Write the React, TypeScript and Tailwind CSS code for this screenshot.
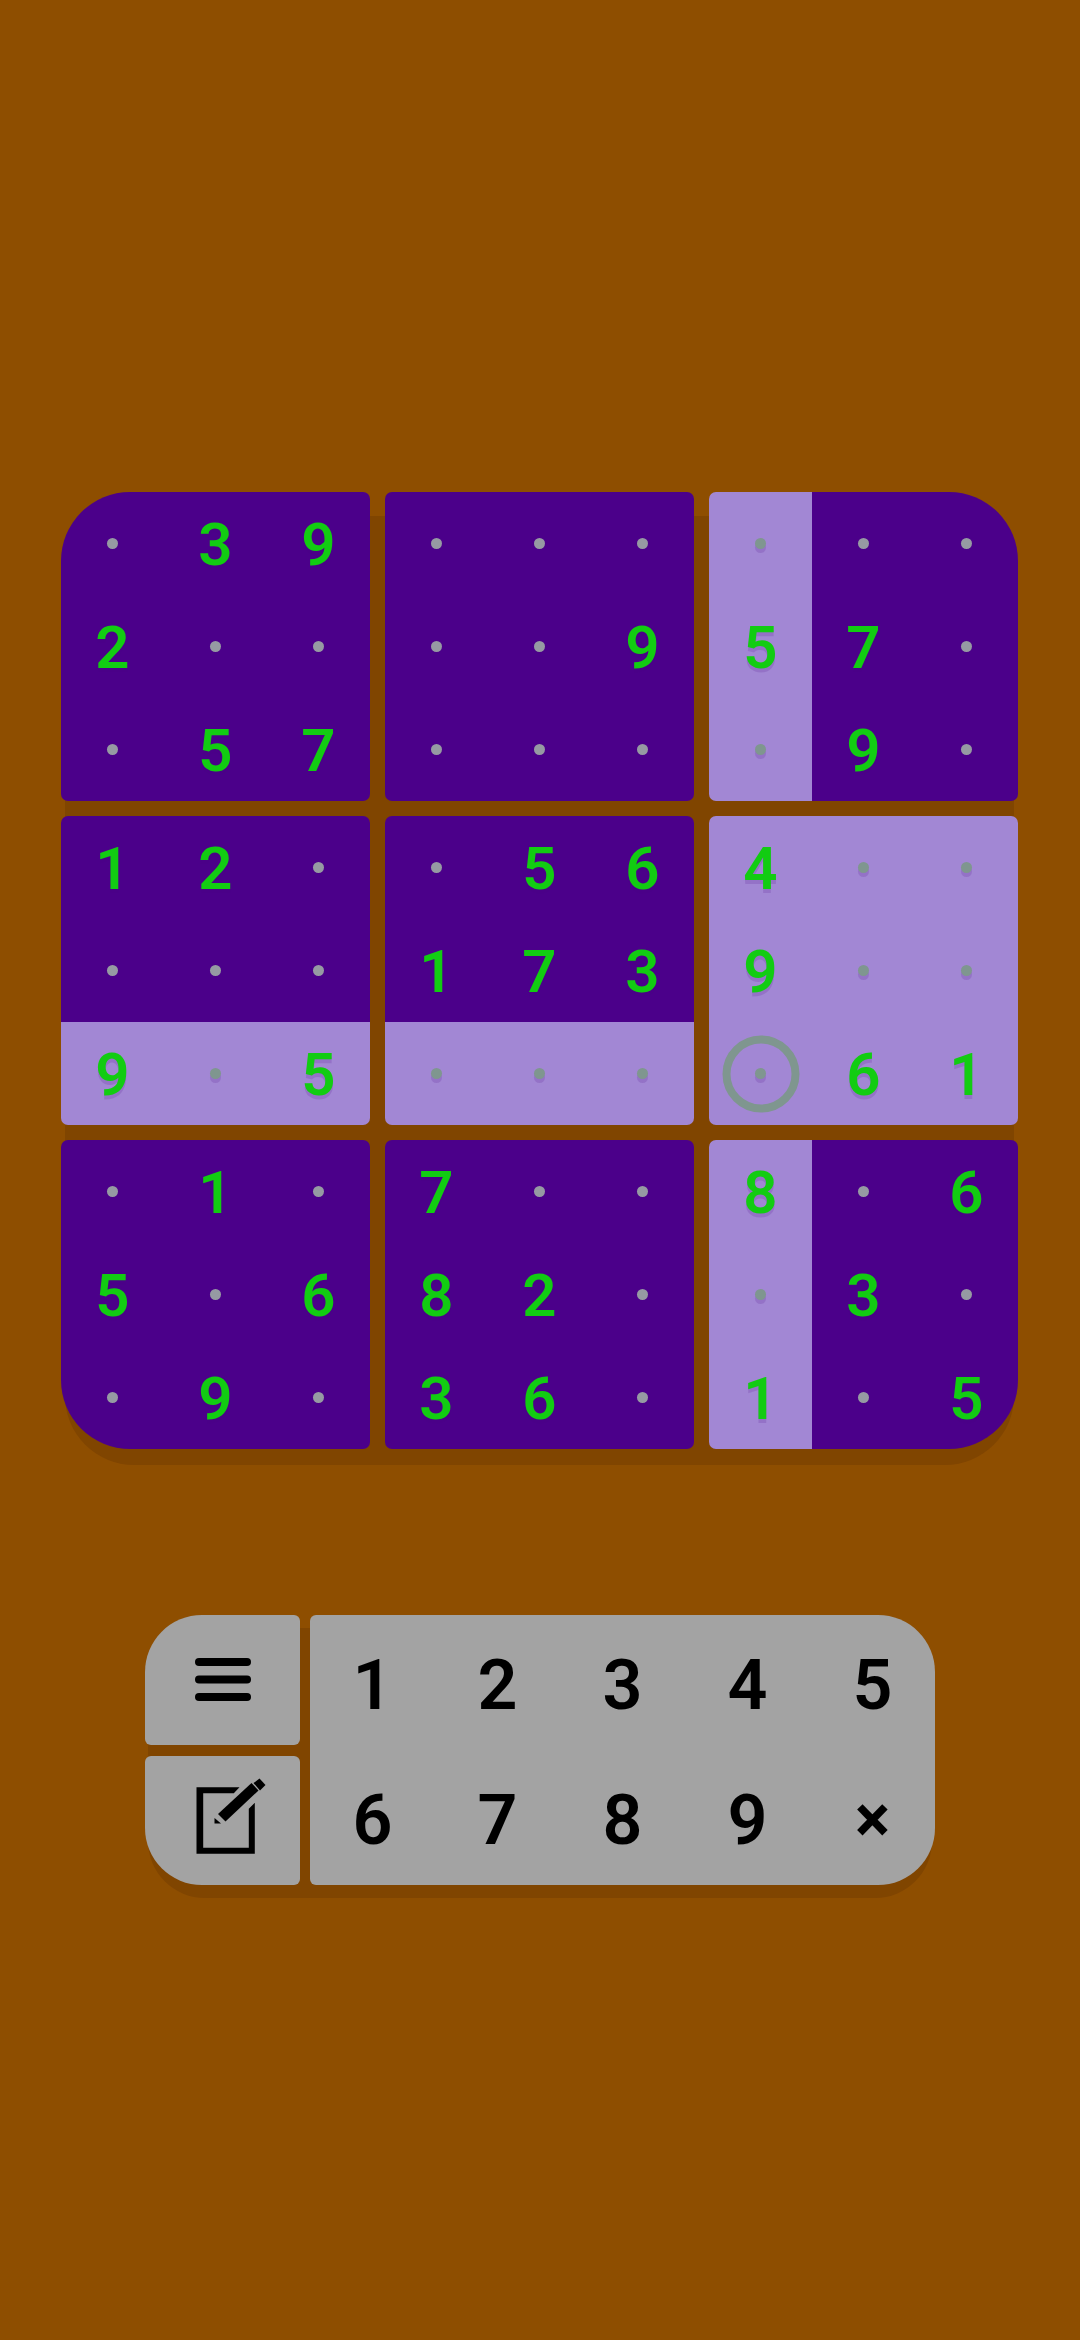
const BOXES = [
  ['.39', '2..', '.57'],
  ['...', '..9', '...'],
  ['...', '57.', '.9.'],
  ['12.', '...', '9.5'],
  ['.56', '173', '...'],
  ['4..', '9..', '.61'],
  ['.1.', '5.6', '.9.'],
  ['7..', '82.', '36.'],
  ['8.6', '.3.', '1.5'],
];

const BOX_CORNERS = [
  'rounded-[7px] rounded-tl-[69px]',
  'rounded-[7px]',
  'rounded-[7px] rounded-tr-[69px]',
  'rounded-[7px]',
  'rounded-[7px]',
  'rounded-[7px]',
  'rounded-[7px] rounded-bl-[69px]',
  'rounded-[7px]',
  'rounded-[7px] rounded-br-[69px]',
];

const SELECTED = { box: 5, row: 2, col: 0 };

function isLight(box: number, row: number, col: number) {
  if (box === 5) return true;
  if (box === 3 || box === 4) return row === 2;
  if (box === 2 || box === 8) return col === 0;
  return false;
}

function Cell({ value, light, selected }: { value: string; light: boolean; selected: boolean }) {
  return (
    <div className={`relative flex items-center justify-center ${light ? 'bg-[#a287d4]' : 'bg-[#4b008a]'}`}>
      {value === '.' ? (
        <span
          className={`h-[11px] w-[11px] rounded-full ${
            light ? 'bg-[#7f968f] shadow-[0_4px_0_rgba(75,0,130,0.15)]' : 'bg-[#969aa3]'
          }`}
        />
      ) : (
        <span className="pt-[2px] text-[60px] leading-none font-semibold text-[#12cc12] [text-shadow:0_4px_0_rgba(75,0,130,0.15)]">
          {value}
        </span>
      )}
      {selected && (
        <div className="absolute top-1/2 left-1/2 h-[77px] w-[77px] -translate-x-1/2 -translate-y-1/2 rounded-full border-[8px] border-[#7f968f]" />
      )}
    </div>
  );
}

function MenuIcon() {
  return (
    <svg width="56" height="43" viewBox="0 0 56 43" className="fill-black">
      <rect x="0" y="0" width="56" height="8" rx="4" />
      <rect x="0" y="17.5" width="56" height="8" rx="4" />
      <rect x="0" y="35" width="56" height="8" rx="4" />
    </svg>
  );
}

function EditIcon() {
  return (
    <svg width="90" height="90" viewBox="-7.5 4.5 90 90" className="fill-black">
      <path d="M54 16.7 L11 16.7 L11 83.3 L69.3 83.3 L69.3 32.3 L63.3 38.3 L63.3 77.3 L17.7 77.3 L17.7 22.7 L48.3 22.7 Z" />
      <path d="M32.5 43.5 L66 12.5 L73 20 L40 51 Z" />
      <path d="M68 12.5 L74 8 L80 14.5 L74.5 20 Z" />
      <path d="M29 47.5 L35.5 53 L29 53 Z" />
    </svg>
  );
}

export default function App() {
  return (
    <div className="flex h-[2340px] w-[1080px] flex-col overflow-hidden bg-[#8e4e00] pt-[492px] pl-[61px] font-['Roboto',sans-serif]">
      {/* Board */}
      <div className="relative w-[957px]">
        <div className="absolute top-[24px] right-[4px] -bottom-[16px] left-[4px] rounded-[69px] bg-[#804500]" />
        <div className="relative grid grid-cols-3 gap-[15px]">
          {BOXES.map((rows, box) => (
            <div
              key={box}
              className={`grid h-[309px] grid-cols-3 grid-rows-3 overflow-hidden ${BOX_CORNERS[box]}`}
            >
              {rows.map((row, r) =>
                row.split('').map((value, c) => (
                  <Cell
                    key={`${r}-${c}`}
                    value={value}
                    light={isLight(box, r, c)}
                    selected={SELECTED.box === box && SELECTED.row === r && SELECTED.col === c}
                  />
                ))
              )}
            </div>
          ))}
        </div>
      </div>

      {/* Number pad */}
      <div className="relative mt-[166px] ml-[84px] w-[790px]">
        <div className="absolute top-[13px] right-[3px] -bottom-[13px] left-[3px] rounded-[57px] bg-[#804500]" />
        <div className="relative flex h-[270px] gap-[10px]">
          <div className="flex w-[155px] flex-col gap-[11px]">
            <button className="flex h-[129.5px] items-center justify-center rounded-[6px] rounded-tl-[57px] bg-[#a3a3a3]">
              <MenuIcon />
            </button>
            <button className="flex h-[129.5px] items-center justify-center rounded-[6px] rounded-bl-[57px] bg-[#a3a3a3]">
              <EditIcon />
            </button>
          </div>
          <div className="grid w-[625px] grid-cols-5 grid-rows-2 rounded-[6px] rounded-tr-[57px] rounded-br-[57px] bg-[#a3a3a3]">
            {['1', '2', '3', '4', '5', '6', '7', '8', '9', '×'].map((key) => (
              <button
                key={key}
                className={`flex items-center justify-center pt-[5px] leading-none text-black ${
                  key === '×' ? 'text-[66px] font-bold' : 'text-[70px] font-semibold'
                }`}
              >
                {key}
              </button>
            ))}
          </div>
        </div>
      </div>
    </div>
  );
}
